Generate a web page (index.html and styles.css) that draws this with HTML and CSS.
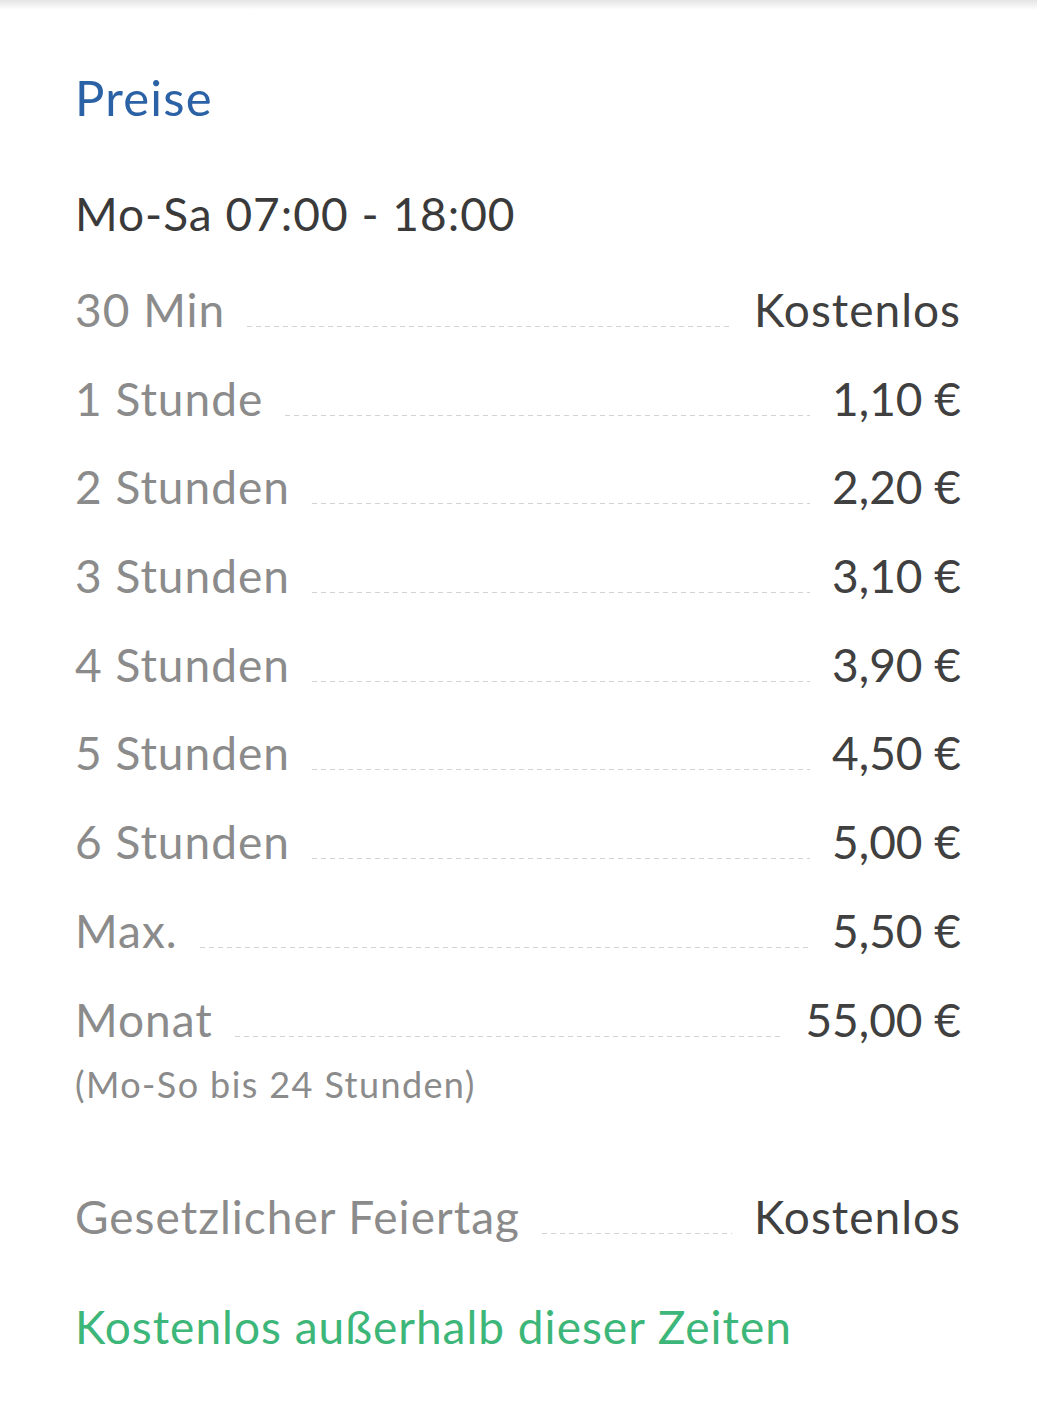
FILE: index.html
```html
<!DOCTYPE html>
<html lang="de">
<head>
<meta charset="utf-8">
<title>Preise</title>
<link rel="stylesheet" href="styles.css">
</head>
<body>
<div class="shade"></div>
<main class="page">
  <h1 class="title">Preise</h1>
  <div class="period">Mo-Sa 07:00 - 18:00</div>
  <ul class="prices">
    <li class="row"><span class="label">30 Min</span><span class="leader"></span><span class="value">Kostenlos</span></li>
    <li class="row"><span class="label">1 Stunde</span><span class="leader"></span><span class="value num">1,10 €</span></li>
    <li class="row"><span class="label">2 Stunden</span><span class="leader"></span><span class="value num">2,20 €</span></li>
    <li class="row"><span class="label">3 Stunden</span><span class="leader"></span><span class="value num">3,10 €</span></li>
    <li class="row"><span class="label">4 Stunden</span><span class="leader"></span><span class="value num">3,90 €</span></li>
    <li class="row"><span class="label">5 Stunden</span><span class="leader"></span><span class="value num">4,50 €</span></li>
    <li class="row"><span class="label">6 Stunden</span><span class="leader"></span><span class="value num">5,00 €</span></li>
    <li class="row"><span class="label">Max.</span><span class="leader"></span><span class="value num">5,50 €</span></li>
    <li class="row"><span class="label">Monat</span><span class="leader"></span><span class="value num">55,00 €</span></li>
  </ul>
  <div class="note">(Mo-So bis 24 Stunden)</div>
  <div class="row holiday"><span class="label">Gesetzlicher Feiertag</span><span class="leader"></span><span class="value">Kostenlos</span></div>
  <div class="free">Kostenlos außerhalb dieser Zeiten</div>
</main>
</body>
</html>
```
FILE: styles.css
```css
html, body {
  margin: 0;
  padding: 0;
  background: #ffffff;
}
body {
  font-family: Lato, "Open Sans", "Liberation Sans", sans-serif;
  color: #3d3d3d;
}
.shade {
  height: 10px;
  background: linear-gradient(to bottom, #e4e4e4, #ffffff);
}
.page {
  padding: 0 76px 0 75px;
}
.title {
  margin: 57px 0 0;
  font-size: 49px;
  font-weight: 400;
  line-height: 60px;
  letter-spacing: 1.2px;
  color: #2b62a6;
}
.period {
  margin-top: 57px;
  font-size: 46px;
  line-height: 60px;
  letter-spacing: 1px;
  color: #3a3a3a;
}
.prices {
  list-style: none;
  margin: 22px 0 0;
  padding: 0;
}
.row {
  display: flex;
  align-items: baseline;
  height: 88.7px;
  line-height: 88.7px;
  font-size: 46px;
  letter-spacing: 1px;
}
.label {
  color: #8b8b8b;
}
.value {
  color: #404040;
}
.value.num {
  letter-spacing: 0;
}
.leader {
  flex: 1;
  margin: 0 22px;
  height: 1px;
  background: repeating-linear-gradient(to right, #d2d2d2 0 5px, transparent 5px 9px);
}
.note {
  font-size: 36px;
  line-height: 40px;
  letter-spacing: 1.4px;
  color: #8b8b8b;
}
.holiday {
  margin-top: 69px;
}
.free {
  margin-top: 35px;
  font-size: 46px;
  line-height: 60px;
  letter-spacing: 1px;
  color: #3db679;
}
```
